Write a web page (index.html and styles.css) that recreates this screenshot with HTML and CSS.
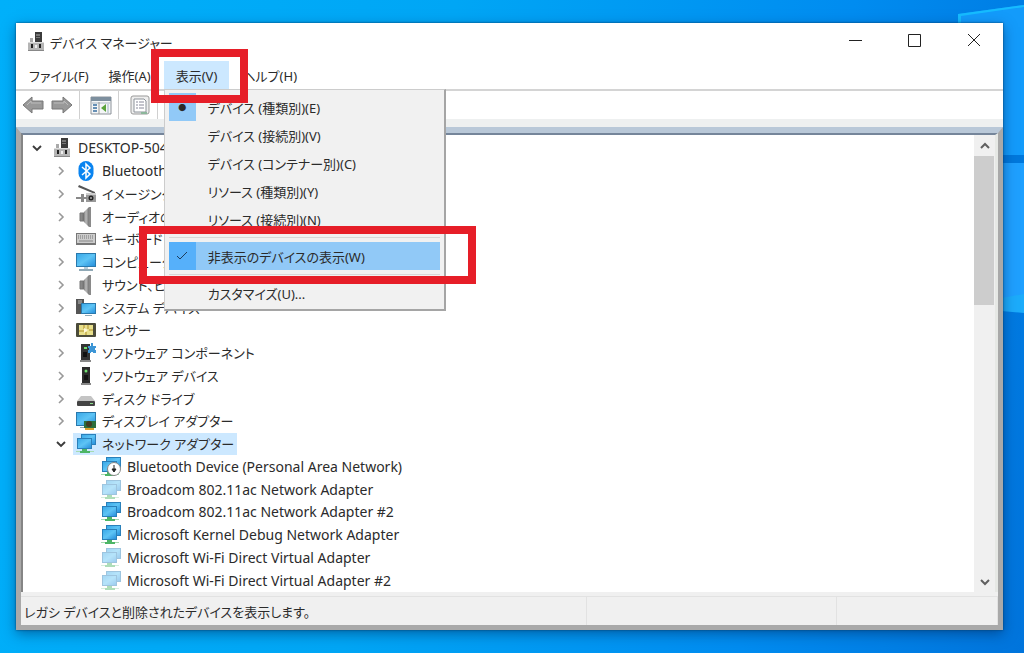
FILE: index.html
```html
<!DOCTYPE html>
<html lang="ja">
<head>
    <meta charset="UTF-8">
    <meta name="viewport" content="width=device-width, initial-scale=1.0">
    <title>デバイス マネージャー</title>
    <link rel="stylesheet" href="styles.css">
</head>
<body>

<!-- Shared icons -->
<svg class="icon-defs" aria-hidden="true">
    <defs>
        <linearGradient id="screen" x1="0" y1="0" x2="1" y2="1">
            <stop offset="0" stop-color="#3aa9e8"/>
            <stop offset=".5" stop-color="#5ec4f5"/>
            <stop offset="1" stop-color="#2790dc"/>
        </linearGradient>
        <linearGradient id="metal" x1="0" y1="0" x2="1" y2="0">
            <stop offset="0" stop-color="#666"/>
            <stop offset=".5" stop-color="#bbb"/>
            <stop offset="1" stop-color="#777"/>
        </linearGradient>
    </defs>
    <symbol id="i-right" viewBox="0 0 16 16"><path d="M6 4l4 4-4 4" fill="none" stroke="#999" stroke-width="1.6"/></symbol>
    <symbol id="i-down" viewBox="0 0 16 16"><path d="M4 6l4 4 4-4" fill="none" stroke="#3c3c3c" stroke-width="1.9"/></symbol>
    <symbol id="i-computer" viewBox="0 0 20 20">
        <path d="M9 0h7v11H9z" fill="#3b3b3b"/>
        <path d="M10 2h4v2h-4zM10 5h4v1h-4z" fill="#777"/>
        <path d="M4 6h3v5H4z" fill="#aaa"/>
        <path d="M2 10h16v9H2z" fill="#b5b5b5"/>
        <path d="M2 10h16v1H2z" fill="#ddd"/>
        <path d="M2 18h16v1H2z" fill="#888"/>
        <path d="M5 12h2v4H5zM13 12h2v4h-2z" fill="#222"/>
        <path d="M9 13h2v3H9z" fill="#eee"/>
    </symbol>
    <symbol id="i-bluetooth" viewBox="0 0 20 20">
        <rect x="2.500" y="0" width="15" height="20" rx="7.500" fill="#0a84f0"/>
        <path d="M6 6l8 7-4 4V3l4 4-8 7" fill="none" stroke="#fff" stroke-width="1.500"/>
    </symbol>
    <symbol id="i-imaging" viewBox="0 0 20 20">
        <path d="M3 1l16 7v2L2 3z" fill="#555"/>
        <path d="M10 9h10v9H10z" fill="#999"/>
        <path d="M10 9h10v2H10z" fill="#ccc"/>
        <path d="M5 10h3v8H5zM0 13h11v2H0z" fill="#888"/>
        <circle cx="15" cy="14" r="2.500" fill="#222"/>
        <circle cx="15" cy="14" r="1" fill="#aaa"/>
    </symbol>
    <symbol id="i-speaker" viewBox="0 0 20 20">
        <path d="M4 6h3v8H4z" fill="#888" stroke="#777"/>
        <path d="M7 6l6-6v20l-6-6z" fill="url(#metal)"/>
        <path d="M13 0h2v20h-2z" fill="#8a8a8a"/>
    </symbol>
    <symbol id="i-keyboard" viewBox="0 0 20 20">
        <path d="M0 4h20v12H0z" fill="#777"/>
        <path d="M1 5h18v9H1z" fill="#ccc"/>
        <path d="M2 7h16M2 9h16" stroke="#777" stroke-dasharray="1 1"/>
        <path d="M3 12h14" stroke="#888"/>
    </symbol>
    <symbol id="i-monitor" viewBox="0 0 20 20">
        <path d="M0 1h20v14H0z" fill="#2a79ad"/>
        <path d="M1 2h18v12H1z" fill="url(#screen)"/>
        <path d="M8 15h4v2H8z" fill="#b6ccd8"/>
        <path d="M3 17h14v2H3z" fill="#90a9b6"/>
    </symbol>
    <symbol id="i-system" viewBox="0 0 20 20">
        <path d="M0 1h8v15H0z" fill="#555"/>
        <path d="M2 3h4M2 5h4" stroke="#bbb"/>
        <path d="M5 5h15v11H5z" fill="#2a79ad"/>
        <path d="M6 6h13v9H6z" fill="url(#screen)"/>
        <path d="M9 17h7v1H9z" fill="#90a9b6"/>
    </symbol>
    <symbol id="i-sensor" viewBox="0 0 20 20">
        <rect x="0" y="3" width="20" height="14" rx="1" fill="#4b4b3a"/>
        <path d="M3 5h14v10H3z" fill="#e8e08c"/>
        <path d="M8 5v4M3 11h5M12 5v4M13 10h4M10 12v3" stroke="#b08f2a"/>
        <path d="M8 8l4 2-4 3z" fill="#fff8d8"/>
    </symbol>
    <symbol id="i-component" viewBox="0 0 20 20">
        <path d="M5 1h9v16H5z" fill="#333"/>
        <path d="M4 17h11v2H4z" fill="#888"/>
        <path d="M8 4h3v2H8z" fill="#6fe06f"/>
        <path d="M7 9h4v5H7z" fill="#111"/>
        <path d="M12 3h3V0h2v3h3v2h-1v2h1v3h-3V9h-2v1h-3V7h1V5h-1z" fill="#3d96d6"/>
    </symbol>
    <symbol id="i-device" viewBox="0 0 20 20">
        <path d="M6 1h8v16H6z" fill="#2c2c2c"/>
        <path d="M5 17h10v2H5z" fill="#888"/>
        <circle cx="10" cy="5" r="1.500" fill="#6fe06f"/>
        <path d="M8 9h4v5H8z" fill="#111"/>
    </symbol>
    <symbol id="i-disk" viewBox="0 0 20 20">
        <path d="M5 7h10l4 5H1z" fill="#c4c4c4"/>
        <rect x="1" y="12" width="18" height="5" rx="1" fill="#444"/>
        <path d="M14 14h3v1h-3z" fill="#8de08d"/>
    </symbol>
    <symbol id="i-display" viewBox="0 0 20 20">
        <path d="M0 1h20v14H0z" fill="#2a79ad"/>
        <path d="M1 2h18v12H1z" fill="url(#screen)"/>
        <path d="M4 16h6v1H4z" fill="#90a9b6"/>
        <path d="M8 10h12v7H8z" fill="#2c6e3c"/>
        <circle cx="13" cy="13" r="3" fill="#413c22"/>
        <path d="M9 17h9v2H9z" fill="#d9a02c"/>
    </symbol>
    <symbol id="i-network" viewBox="0 0 20 20">
        <path d="M5 0h15v11H5z" fill="#2a80ba"/>
        <path d="M6 1h13v9H6z" fill="url(#screen)"/>
        <path d="M1 4h15v11H1z" fill="#2a80ba"/>
        <path d="M2 5h13v9H2z" fill="url(#screen)"/>
        <path d="M6 15h5v2h3v2H4v-2h2z" fill="#4db566"/>
        <path d="M0 17h4v1H0zM14 17h4v1h-4z" fill="#a5dbb0"/>
    </symbol>
    <symbol id="i-network-disabled" viewBox="0 0 20 20">
        <use href="#i-network"/>
        <circle cx="13" cy="12" r="6.500" fill="#fff" stroke="#888"/>
        <path d="M13 8v5M11 12l2 3 2-3z" fill="#222" stroke="#222"/>
    </symbol>
</svg>

<!-- Wallpaper light beams -->
<svg class="wallpaper" viewBox="0 0 1024 653" preserveAspectRatio="none" aria-hidden="true">
    <path d="M958 14l66-9v150H958z" fill="#139bfb"/>
    <path d="M958 14l66-9v2l-63 9v10h-3z" fill="#16bcff"/>
    <path d="M990 163h34v134l-34 5z" fill="#1fa0ff"/>
    <path d="M990 155h34v8h-34z" fill="#0078dc"/>
    <path d="M990 300l34-6v19l-34-3z" fill="#1cacfb"/>
</svg>

<main class="window">
    <header class="titlebar">
        <svg class="icon"><use href="#i-computer"/></svg>
        <h1 class="title">デバイス マネージャー</h1>
        <div class="controls">
            <button type="button" aria-label="最小化"><svg viewBox="0 0 14 14"><path d="M0 7.500h13" /></svg></button>
            <button type="button" aria-label="最大化"><svg viewBox="0 0 14 14"><path d="M.5 1.500h12v12H.5z" /></svg></button>
            <button type="button" aria-label="閉じる"><svg viewBox="0 0 14 14"><path d="M1 1l12 12M13 1L1 13" /></svg></button>
        </div>
    </header>

    <nav class="menubar">
        <button type="button">ファイル(F)</button>
        <button type="button">操作(A)</button>
        <div class="menu-holder">
            <button type="button" class="open">表示(V)</button>
            <!-- View menu -->
            <div class="dropdown" role="menu">
                <button type="button" role="menuitemradio" aria-checked="true" class="radio"><span class="mark">●</span>デバイス (種類別)(E)</button>
                <button type="button" role="menuitemradio"><span class="mark"></span>デバイス (接続別)(V)</button>
                <button type="button" role="menuitemradio"><span class="mark"></span>デバイス (コンテナー別)(C)</button>
                <button type="button" role="menuitemradio"><span class="mark"></span>リソース (種類別)(Y)</button>
                <button type="button" role="menuitemradio"><span class="mark"></span>リソース (接続別)(N)</button>
                <hr>
                <div class="item-holder">
                    <button type="button" role="menuitemcheckbox" aria-checked="true" class="hover"><span class="mark"><svg viewBox="0 0 12 12"><path d="M1 6l3 3 7-7"/></svg></span>非表示のデバイスの表示(W)</button>
                    <div class="frame frame-item"></div>
                </div>
                <hr>
                <button type="button" role="menuitem"><span class="mark"></span>カスタマイズ(U)...</button>
            </div>
            <div class="frame frame-menu"></div>
        </div>
        <button type="button">ヘルプ(H)</button>
    </nav>

    <div class="toolbar">
        <div class="group">
            <button type="button" aria-label="戻る"><svg viewBox="0 0 22 20"><path d="M1 10l9-8v4h11v8H10v4z" fill="#999" stroke="#777"/><path d="M5 10l4-4v2h10" fill="none" stroke="#bbb"/></svg></button>
            <button type="button" aria-label="進む"><svg viewBox="0 0 22 20"><path d="M21 10l-9-8v4H1v8h11v4z" fill="#999" stroke="#777"/><path d="M3 8h10V6l4 4" fill="none" stroke="#bbb"/></svg></button>
        </div>
        <div class="group">
            <button type="button" aria-label="コンソール ツリーの表示"><svg viewBox="0 0 22 20"><path d="M1 2h20v17H1z" fill="#f4f6f7" stroke="#8c9299"/><path d="M1 2h20v4H1z" fill="#7d8f9e"/><path d="M2 8h18" stroke="#aab7c2"/><path d="M3 10h4M3 13h4M3 16h4" stroke="#668fb5" stroke-width="2"/><path d="M9 7v12" stroke="#999"/><path d="M16 9v8l-5-4z" fill="#5aa33c"/><path d="M18 9v9" stroke="#c8d4dc" stroke-width="2"/></svg></button>
        </div>
        <div class="group">
            <button type="button" aria-label="プロパティ"><svg viewBox="0 0 22 20"><rect x="2" y="1" width="18" height="18" rx="2" fill="#eee" stroke="#999"/><path d="M5 4h10l2 2v11H5z" fill="#fff" stroke="#8c9299"/><path d="M7 7h2M10 7h5M7 10h2M10 10h5M7 13h2M10 13h5" stroke="#889"/><path d="M12 17h6v2h-6z" fill="#8bb69a"/></svg></button>
        </div>
        <div class="group"></div>
    </div>

    <div class="client">
        <ul class="tree">
            <li><svg class="arrow"><use href="#i-down"/></svg><span class="node latin"><svg class="icon"><use href="#i-computer"/></svg>DESKTOP-504</span></li>
            <li class="level1"><svg class="arrow"><use href="#i-right"/></svg><span class="node latin"><svg class="icon"><use href="#i-bluetooth"/></svg>Bluetooth</span></li>
            <li class="level1"><svg class="arrow"><use href="#i-right"/></svg><span class="node"><svg class="icon"><use href="#i-imaging"/></svg>イメージング</span></li>
            <li class="level1"><svg class="arrow"><use href="#i-right"/></svg><span class="node"><svg class="icon"><use href="#i-speaker"/></svg>オーディオの</span></li>
            <li class="level1"><svg class="arrow"><use href="#i-right"/></svg><span class="node"><svg class="icon"><use href="#i-keyboard"/></svg>キーボード</span></li>
            <li class="level1"><svg class="arrow"><use href="#i-right"/></svg><span class="node"><svg class="icon"><use href="#i-monitor"/></svg>コンピューター</span></li>
            <li class="level1"><svg class="arrow"><use href="#i-right"/></svg><span class="node"><svg class="icon"><use href="#i-speaker"/></svg>サウンド、ビ</span></li>
            <li class="level1"><svg class="arrow"><use href="#i-right"/></svg><span class="node"><svg class="icon"><use href="#i-system"/></svg>システム デバイス</span></li>
            <li class="level1"><svg class="arrow"><use href="#i-right"/></svg><span class="node"><svg class="icon"><use href="#i-sensor"/></svg>センサー</span></li>
            <li class="level1"><svg class="arrow"><use href="#i-right"/></svg><span class="node"><svg class="icon"><use href="#i-component"/></svg>ソフトウェア コンポーネント</span></li>
            <li class="level1"><svg class="arrow"><use href="#i-right"/></svg><span class="node"><svg class="icon"><use href="#i-device"/></svg>ソフトウェア デバイス</span></li>
            <li class="level1"><svg class="arrow"><use href="#i-right"/></svg><span class="node"><svg class="icon"><use href="#i-disk"/></svg>ディスク ドライブ</span></li>
            <li class="level1"><svg class="arrow"><use href="#i-right"/></svg><span class="node"><svg class="icon"><use href="#i-display"/></svg>ディスプレイ アダプター</span></li>
            <li class="level1"><svg class="arrow"><use href="#i-down"/></svg><span class="node selected"><svg class="icon"><use href="#i-network"/></svg>ネットワーク アダプター</span></li>
            <li class="level2"><span class="node latin"><svg class="icon"><use href="#i-network-disabled"/></svg>Bluetooth Device (Personal Area Network)</span></li>
            <li class="level2"><span class="node latin"><svg class="icon faded"><use href="#i-network"/></svg>Broadcom 802.11ac Network Adapter</span></li>
            <li class="level2"><span class="node latin"><svg class="icon"><use href="#i-network"/></svg>Broadcom 802.11ac Network Adapter #2</span></li>
            <li class="level2"><span class="node latin"><svg class="icon"><use href="#i-network"/></svg>Microsoft Kernel Debug Network Adapter</span></li>
            <li class="level2"><span class="node latin"><svg class="icon faded"><use href="#i-network"/></svg>Microsoft Wi-Fi Direct Virtual Adapter</span></li>
            <li class="level2"><span class="node latin"><svg class="icon faded"><use href="#i-network"/></svg>Microsoft Wi-Fi Direct Virtual Adapter #2</span></li>
        </ul>
        <div class="scrollbar">
            <button type="button" aria-label="上へ"><svg viewBox="0 0 16 16"><path d="M4 10l4-4 4 4"/></svg></button>
            <div class="track"><div class="thumb"></div></div>
            <button type="button" aria-label="下へ"><svg viewBox="0 0 16 16"><path d="M4 6l4 4 4-4"/></svg></button>
        </div>
    </div>

    <footer class="statusbar">
        <p>レガシ デバイスと削除されたデバイスを表示します。</p>
        <p></p>
        <p></p>
    </footer>
</main>

</body>
</html>
```
FILE: styles.css
```css
* {
  box-sizing: border-box;
}

body {
  margin: 0;
  min-height: 100vh;
  padding: 23px 21px 23px 16px;
  display: flex;
  font-family: "Noto Sans", "Noto Sans CJK JP", sans-serif;
  font-size: 13px;
  font-feature-settings: "palt";
  color: #2b2b2b;
  background: linear-gradient(100deg, #00b0fa 0%, #00a6f5 40%, #008cf0 75%, #0074dc 100%);
  overflow: hidden;
}

button {
  margin: 0;
  padding: 0;
  border: none;
  background: none;
  font: inherit;
  font-feature-settings: inherit;
  color: inherit;
  white-space: nowrap;
}

.icon-defs {
  position: absolute;
  width: 0;
  height: 0;
}

.wallpaper {
  position: absolute;
  top: 0;
  left: 0;
  width: 100%;
  height: 100%;
}

.window {
  position: relative;
  flex: 1;
  display: flex;
  flex-direction: column;
  background: #fff;
  box-shadow: 0 0 2px #00406c, 0 4px 12px rgba(0, 40, 90, 0.5);
}

/* title bar */
.titlebar {
  display: flex;
  align-items: center;
  height: 38px;
  padding-left: 10px;
}

.icon {
  width: 20px;
  height: 20px;
  flex: none;
}

.title {
  flex: 1;
  margin: 0 0 0 4px;
  font-size: 13px;
  font-weight: normal;
}

.controls {
  display: flex;
}

.controls button {
  width: 59px;
  height: 38px;
}

.controls svg {
  width: 14px;
  height: 14px;
  fill: none;
  stroke: #222;
}

/* menu bar */
.menubar {
  display: flex;
  height: 30px;
  padding-left: 3px;
  border-bottom: 2px solid #d4d4d4;
}

.menubar > button {
  height: 28px;
  padding: 0 10px;
}

.menu-holder {
  position: relative;
  margin: 0 3px;
}

.open {
  height: 28px;
  padding: 0 12px;
  background: #cce8ff;
}

.dropdown {
  position: absolute;
  z-index: 1;
  top: 28px;
  left: 0;
  width: 282px;
  padding: 3px 4px 2px;
  background: #f1f1f1;
  border: 1px solid #ccc;
  border-right: 2px solid #a5a5a5;
  border-bottom: 2px solid #a5a5a5;
}

.dropdown button {
  display: flex;
  align-items: center;
  width: 100%;
  height: 28px;
}

.dropdown hr {
  height: 1px;
  margin: 4px 0;
  border: none;
  background: #d7d7d7;
}

.mark {
  display: flex;
  align-items: center;
  justify-content: center;
  width: 27px;
  height: 28px;
  margin-right: 12px;
  font-size: 8px;
}

.mark svg {
  width: 12px;
  height: 12px;
  fill: none;
  stroke: #1f3d5c;
}

.radio .mark {
  background: #91c9f7;
}

.dropdown .hover {
  background: #91c9f7;
}

.hover .mark {
  background: #56b0fa;
}

.item-holder {
  position: relative;
}

/* red marker frames */
.frame {
  position: absolute;
  z-index: 2;
  border: 8px solid #e61e28;
  pointer-events: none;
}

.frame-menu {
  top: -12px;
  left: -13px;
  width: 97px;
  height: 54px;
}

.frame-item {
  inset: -16px -36px -14px -30px;
}

/* tool bar */
.toolbar {
  display: flex;
  align-items: center;
  height: 28px;
}

.group {
  display: flex;
  gap: 7px;
  height: 28px;
  padding: 0 6px 0 10px;
  align-items: center;
  border-right: 1px solid #d0d0d0;
}

.group:first-child {
  padding: 0 6px;
}

.group:last-child {
  border: none;
}

.toolbar button,
.toolbar svg {
  display: block;
  width: 22px;
  height: 20px;
}

/* tree */
.client {
  flex: 1;
  display: flex;
  border-style: solid;
  border-color: #b9c8d8 #a9a9a9;
  border-width: 6px 5px 0;
  margin-top: 8px;
  outline: 8px solid #eef0f0;
  clip-path: inset(-8px 0 0 0);
}

.tree {
  flex: 1;
  display: flex;
  flex-direction: column;
  margin: 0;
  padding: 2px 0 0;
  list-style: none;
  border-top: 2px solid #75859a;
  border-left: 2px solid #858585;
}

.tree li {
  flex: 1;
  display: flex;
  align-items: center;
  gap: 4px;
  min-height: 0;
  padding-left: 6px;
  line-height: 20px;
  white-space: nowrap;
}

.tree .level1 {
  padding-left: 30px;
}

.tree .level2 {
  padding-left: 75px;
}

.arrow {
  width: 16px;
  height: 16px;
}

.node {
  display: flex;
  align-items: center;
  gap: 6px;
  height: 22px;
  padding: 0 3px;
}

.latin {
  font-size: 14px;
}

.selected {
  background: #cce8ff;
}

.faded {
  opacity: 0.45;
}

/* scroll bar */
.scrollbar {
  display: flex;
  flex-direction: column;
  width: 24px;
  border-top: 2px solid #75859a;
  border-right: 3px solid #e6e8e5;
  background: #f0f0f0;
}

.scrollbar button {
  height: 21px;
}

.scrollbar svg {
  display: block;
  width: 16px;
  height: 16px;
  margin: 0 auto;
  fill: none;
  stroke: #606060;
  stroke-width: 2;
}

.track {
  flex: 1;
}

.thumb {
  width: 20px;
  height: 36%;
  background: #cdcdcd;
}

/* status bar */
.statusbar {
  display: grid;
  grid-template-columns: 566px 250px 1fr;
  height: 38px;
  padding-top: 4px;
  background: #f0f0f0;
  border: solid #a9a9a9;
  border-width: 0 5px 5px;
}

.statusbar p {
  display: flex;
  align-items: center;
  margin: 0;
  padding-left: 3px;
  border-top: 1px solid #e2e2e2;
  border-right: 1px solid #e2e2e2;
}
```
